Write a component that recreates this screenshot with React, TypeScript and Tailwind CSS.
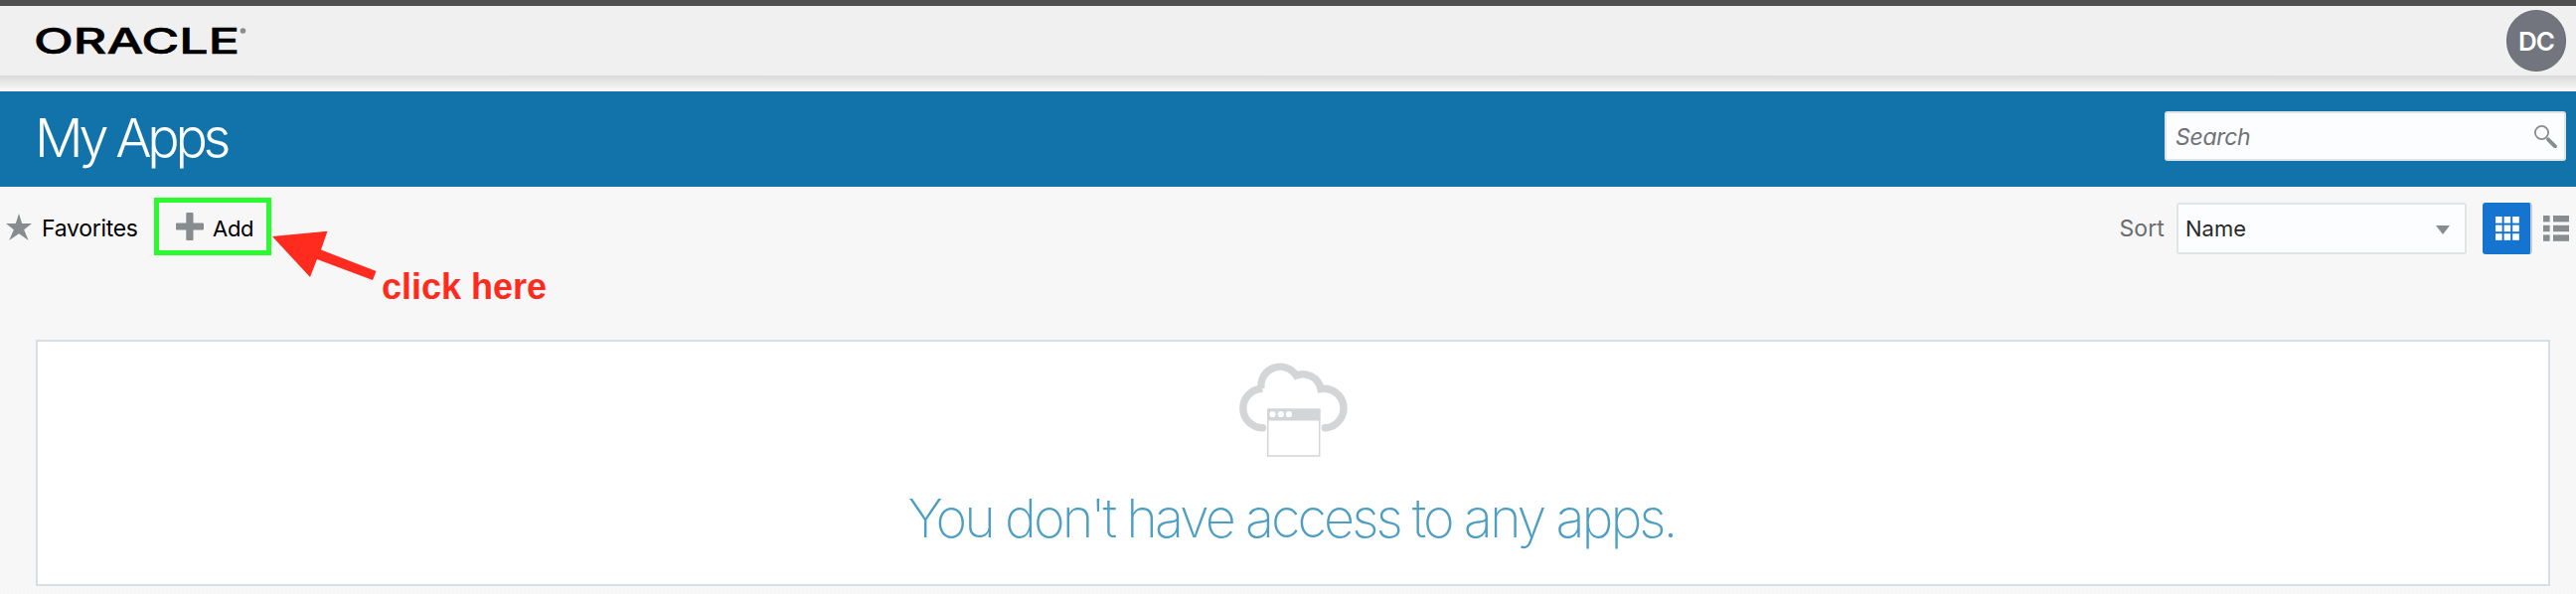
import React from "react";

const font = "font-['Inter',sans-serif]";

function OracleLogo() {
  return (
    <svg width="220" height="56" viewBox="0 0 220 56" className="-ml-1 block shrink-0" role="img" aria-label="Oracle">
      <text x="2" y="41" fontFamily="Inter, sans-serif" fontWeight="500" fontSize="36" textLength="207" lengthAdjust="spacingAndGlyphs" fill="#000" stroke="#000" strokeWidth="0.6">
        ORACLE
      </text>
      <circle cx="212.5" cy="18" r="2.8" fill="#8c8c8c" />
    </svg>
  );
}

function TopBar() {
  return (
    <header className="flex h-[76px] items-center justify-between border-t-[6px] border-[#505050] bg-[#f0f0f0] pr-[10px] pl-9">
      <OracleLogo />
      <div className="flex h-[62px] w-[60px] items-center justify-center rounded-full border border-[#6b6d74] bg-[#72757e] text-[26px] font-semibold tracking-[-1px] text-white">
        DC
      </div>
    </header>
  );
}

function TitleBar() {
  return (
    <div className="flex h-24 items-center justify-between bg-[#1173aa] pr-[10px] pl-[35px]">
      <h1 className="-mt-[3px] text-[54px] leading-none font-light tracking-[-4.3px] text-white">My Apps</h1>
      <div className="-mt-[6px] flex h-[50px] w-[404px] items-center justify-between rounded-[3px] border-2 border-[#dfe4e7] bg-[#fcfdfe] pr-[7px] pl-[9px]">
        <span className="mt-[2px] text-[23px] tracking-[-0.3px] text-[#6f7276] italic">Search</span>
        <svg width="24" height="24" viewBox="0 0 24 24" fill="none" stroke="#878c8f">
          <circle cx="8.5" cy="8.5" r="6.6" strokeWidth="1.8" />
          <path d="M15 15.3 22 22.3" strokeWidth="3.8" strokeLinecap="round" />
        </svg>
      </div>
    </div>
  );
}

function ListIcon() {
  return (
    <svg width="26" height="26" viewBox="0 0 26 26" fill="#878c8f" className="ml-[11px]">
      {[0, 9.8, 19.4].map((y) => (
        <g key={y}>
          <rect x="0" y={y} width="6.6" height="6.4" />
          <rect x="10" y={y} width="16" height="6.4" />
        </g>
      ))}
    </svg>
  );
}

function GridIcon() {
  return (
    <svg width="24" height="24" viewBox="0 0 24 24" fill="#fff">
      {[0, 8.6, 17.2].map((y) =>
        [0, 8.6, 17.2].map((x) => <rect key={`${x}-${y}`} x={x} y={y} width="6.6" height="6.6" />)
      )}
    </svg>
  );
}

function Toolbar() {
  return (
    <div className="relative flex h-[154px] items-start justify-between pr-[7px] pl-[6px]">
      <div className="flex pt-[11px]">
        <div className="flex h-[58px] w-[149px] items-center">
          <svg width="26" height="27" viewBox="0 0 26 27" fill="#878c8f" className="mt-px">
            <path d="M13 0 16.2 10 26 10 18.2 16.3 22.6 27 13 20.3 3.2 27 7.8 16.3 0 10 9.8 10Z" />
          </svg>
          <span className="mt-[4px] ml-[10px] text-[23px] tracking-[-0.3px] text-black">Favorites</span>
        </div>
        <div className="flex h-[58px] w-[118px] items-center border-[5px] border-[#29fb2f] pl-[17px]">
          <svg width="28" height="28" viewBox="0 0 28 28" fill="#878c8f">
            <rect x="10.3" y="0" width="7.2" height="28" rx="1" />
            <rect x="0" y="10.4" width="28" height="7.2" rx="1" />
          </svg>
          <span className="mt-[4px] ml-[9px] text-[22px] tracking-[-0.3px] text-black">Add</span>
        </div>
      </div>
      <div className="flex items-center pt-4">
        <span className="mt-px text-[23px] tracking-[0.1px] text-[#6a6d70]">Sort</span>
        <div className="ml-[12px] flex h-[52px] w-[292px] items-center justify-between rounded-[3px] border-2 border-[#dfe4e7] bg-[#fcfdfe] pr-[15px] pl-[7px]">
          <span className="mt-px text-[22px] text-[#2a2a2a]">Name</span>
          <svg width="14" height="9" viewBox="0 0 14 9" fill="#878c8f" className="mt-[2px]">
            <path d="M0 0H14L7 9Z" />
          </svg>
        </div>
        <div className="ml-4 flex h-[52px] w-[50px] items-center justify-center rounded-[3px] border-r-2 border-[#c4ccd8] bg-[#1574cf] pl-px">
          <GridIcon />
        </div>
        <ListIcon />
      </div>
      <svg width="106" height="52" viewBox="0 0 106 52" className="absolute top-[44px] left-[274px]" fill="#fe2b1e">
        <path d="M0 6 55.5 .8 49 19.5 104.5 41 101 50 45 29 38 47Z" />
      </svg>
      <span className="absolute top-[81px] left-[384px] font-['Liberation_Sans',sans-serif] text-[36px] leading-[40px] font-bold whitespace-nowrap text-[#fe2b1e]">
        click here
      </span>
    </div>
  );
}

function CloudIcon() {
  return (
    <svg width="112" height="100" viewBox="0 0 112 100" fill="none" className="mt-[19px] shrink-0">
      <path
        d="M25.500 67.700A19.700 19.700 0 0 1 25.500 28.300L24 28.300A19.300 19.300 0 0 1 59.300 15A18.500 18.500 0 0 1 84 28.600A19.700 19.700 0 1 1 88.300 67.700"
        stroke="#d4d5d7"
        strokeWidth="7.400"
        strokeLinecap="round"
      />
      <rect x="30.700" y="49" width="52" height="47" fill="#fff" stroke="#d4d5d7" strokeWidth="1.500" />
      <rect x="30" y="49" width="53.500" height="11.500" fill="#d4d5d7" />
      <g fill="#fff">
        <circle cx="35.500" cy="54" r="3.100" />
        <circle cx="43.800" cy="54" r="3.100" />
        <circle cx="52" cy="54" r="3.100" />
      </g>
    </svg>
  );
}

export default function App() {
  return (
    <div className={`h-[598px] w-full overflow-hidden bg-[#f7f7f7] bg-[repeating-linear-gradient(45deg,#f5f5f5_0px,#f5f5f5_1.4px,#f9f9f9_1.4px,#f9f9f9_2.828px)] ${font}`}>
      <TopBar />
      <div className="h-4 bg-linear-to-b from-black/12 to-transparent to-90%" />
      <TitleBar />
      <Toolbar />
      <main className="mr-[26px] ml-9 flex h-[248px] flex-col items-center border-2 border-[#d5dfe7] bg-white">
        <CloudIcon />
        <p className="mt-[26px] mr-[3px] text-[54px] leading-[66px] font-extralight tracking-[-3px] whitespace-nowrap text-[#4d9ec3]">
          You don't have access to any apps.
        </p>
      </main>
    </div>
  );
}
